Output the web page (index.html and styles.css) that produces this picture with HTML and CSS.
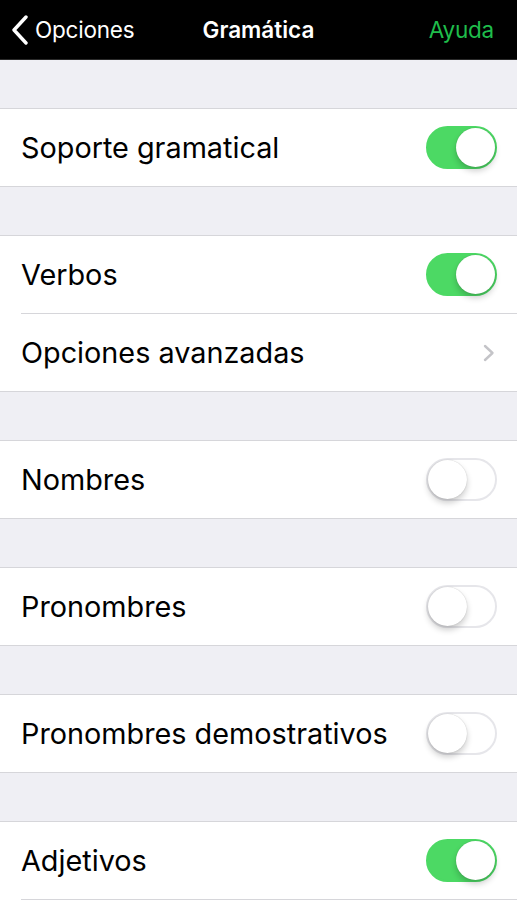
FILE: index.html
```html
<!DOCTYPE html>
<html lang="es">
<head>
<meta charset="utf-8">
<link rel="stylesheet" href="styles.css">
</head>
<body>
<header class="nav">
  <div class="nav-left">
    <svg class="back" width="18" height="30" viewBox="0 0 18 30"><path d="M15 2 L3 15 L15 28" fill="none" stroke="#fff" stroke-width="3.4" stroke-linecap="round" stroke-linejoin="round"/></svg>
    <span>Opciones</span>
  </div>
  <div class="nav-title">Gramática</div>
  <div class="nav-right">Ayuda</div>
</header>
<main>
  <div class="gap"></div>
  <section class="group">
    <div class="row"><span class="label">Soporte gramatical</span><span class="toggle on"><span class="knob"></span></span></div>
  </section>
  <div class="gap"></div>
  <section class="group">
    <div class="row"><span class="label">Verbos</span><span class="toggle on"><span class="knob"></span></span></div>
    <div class="row"><span class="label">Opciones avanzadas</span><svg class="chev" width="12" height="18" viewBox="0 0 12 18"><path d="M2 2 L9.5 9 L2 16" fill="none" stroke="#c4c4c8" stroke-width="2.4" stroke-linecap="round" stroke-linejoin="round"/></svg></div>
  </section>
  <div class="gap"></div>
  <section class="group">
    <div class="row"><span class="label">Nombres</span><span class="toggle"><span class="knob"></span></span></div>
  </section>
  <div class="gap"></div>
  <section class="group">
    <div class="row"><span class="label">Pronombres</span><span class="toggle"><span class="knob"></span></span></div>
  </section>
  <div class="gap"></div>
  <section class="group">
    <div class="row"><span class="label">Pronombres demostrativos</span><span class="toggle"><span class="knob"></span></span></div>
  </section>
  <div class="gap"></div>
  <section class="group open">
    <div class="row"><span class="label">Adjetivos</span><span class="toggle on"><span class="knob"></span></span></div>
  </section>
</main>
</body>
</html>
```
FILE: styles.css
```css
* { box-sizing: border-box; }
html, body { margin: 0; padding: 0; }
body {
  background: #fff;
  font-family: Inter, "Noto Sans", sans-serif;
  width: 517px;
  height: 919px;
  overflow: hidden;
}
.nav {
  height: 60px;
  background: #000;
  border-bottom: 1px solid #2a2a2a;
  display: grid;
  grid-template-columns: 1fr auto 1fr;
  align-items: center;
  padding: 0 23px;
  color: #fff;
  font-size: 22.5px;
  letter-spacing: -0.2px;
}
.nav-left { display: flex; align-items: center; gap: 6px; margin-left: -12px; }
.back { display: block; }
.nav-title { font-weight: 600; letter-spacing: 0; }
.nav-right { color: #1fbd4b; text-align: right; }
.gap {
  height: 48px;
  background: #efeff4;
}
.group {
  background: #fff;
  border-top: 1px solid #d6d6da;
  border-bottom: 1px solid #d6d6da;
}
.group.open { border-bottom: none; }
.row {
  height: 77px;
  display: flex;
  align-items: center;
  justify-content: space-between;
  padding-right: 20px;
  margin-left: 21px;
}
.row + .row { border-top: 1px solid #d6d6da; height: 78px; }
.group.open .row { border-bottom: 1px solid #d6d6da; height: 78px; }
.label {
  font-size: 28.8px;
  color: #000;
  letter-spacing: 0;
}
.toggle {
  width: 71px;
  height: 43px;
  border-radius: 22px;
  background: #fff;
  border: 2px solid #e6e6ea;
  position: relative;
  display: block;
}
.toggle .knob {
  position: absolute;
  top: 0px;
  left: 0px;
  width: 39px;
  height: 39px;
  border-radius: 50%;
  background: #fff;
  box-shadow: 0 4px 6px rgba(0,0,0,0.2), 0 0 1px rgba(0,0,0,0.25);
}
.toggle.on {
  background: #4cd964;
  border-color: #4cd964;
}
.toggle.on .knob { left: 28px; }
.chev { display: block; margin-right: 2px; }
```
